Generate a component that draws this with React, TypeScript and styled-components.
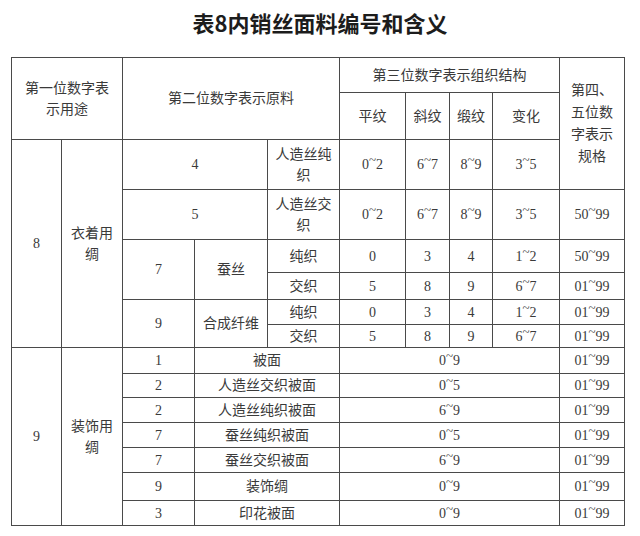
import React from 'react';
import styled, {createGlobalStyle} from 'styled-components';

const Global = createGlobalStyle`
  html, body {
    margin: 0;
    padding: 0;
    background: #ffffff;
  }
`

type Range = string

type FabricRow = {
    code: string
    name: string
    range: Range
    spec: string
}

const decoRows: FabricRow[] = [
    {code: '1', name: '被面', range: '0~9', spec: '01~99'},
    {code: '2', name: '人造丝交织被面', range: '0~5', spec: '01~99'},
    {code: '2', name: '人造丝纯织被面', range: '6~9', spec: '01~99'},
    {code: '7', name: '蚕丝纯织被面', range: '0~5', spec: '01~99'},
    {code: '7', name: '蚕丝交织被面', range: '6~9', spec: '01~99'},
    {code: '9', name: '装饰绸', range: '0~9', spec: '01~99'},
    {code: '3', name: '印花被面', range: '0~9', spec: '01~99'},
]

const decoHeights = [26, 24, 25, 25, 25, 28, 25]
const colWidths = [50, 61, 72, 73, 72, 66, 44, 43, 67, 65]

const Val = ({v}: { v: string }) => {
    const parts = v.split('~')
    if (parts.length < 2) return <>{v}</>
    return <>{parts[0]}<Tilde>~</Tilde>{parts[1]}</>
}

export default function App() {
    return (
        <Page>
            <Global/>
            <Title>表8内销丝面料编号和含义</Title>
            <Table>
                <colgroup>
                    {colWidths.map((w, i) => <col key={i} style={{width: w}}/>)}
                </colgroup>
                <tbody>
                <Row h={35}>
                    <Cell colSpan={2} rowSpan={2}>第一位数字表<br/>示用途</Cell>
                    <Cell colSpan={3} rowSpan={2}>第二位数字表示原料</Cell>
                    <Cell colSpan={4}>第三位数字表示组织结构</Cell>
                    <Cell rowSpan={3} tall>第四、<br/>五位数<br/>字表示<br/>规格</Cell>
                </Row>
                <Row h={47}>
                    <Cell>平纹</Cell>
                    <Cell>斜纹</Cell>
                    <Cell>缎纹</Cell>
                    <Cell>变化</Cell>
                </Row>
                <Row h={50}>
                    <Cell rowSpan={6}>8</Cell>
                    <Cell rowSpan={6} wrap>衣着用绸</Cell>
                    <Cell colSpan={2}>4</Cell>
                    <Cell wrap>人造丝纯织</Cell>
                    <Cell><Val v="0~2"/></Cell>
                    <Cell><Val v="6~7"/></Cell>
                    <Cell><Val v="8~9"/></Cell>
                    <Cell><Val v="3~5"/></Cell>
                </Row>
                <Row h={50}>
                    <Cell colSpan={2}>5</Cell>
                    <Cell wrap>人造丝交织</Cell>
                    <Cell><Val v="0~2"/></Cell>
                    <Cell><Val v="6~7"/></Cell>
                    <Cell><Val v="8~9"/></Cell>
                    <Cell><Val v="3~5"/></Cell>
                    <Cell><Val v="50~99"/></Cell>
                </Row>
                <Row h={33}>
                    <Cell rowSpan={2}>7</Cell>
                    <Cell rowSpan={2}>蚕丝</Cell>
                    <Cell>纯织</Cell>
                    <Cell>0</Cell>
                    <Cell>3</Cell>
                    <Cell>4</Cell>
                    <Cell><Val v="1~2"/></Cell>
                    <Cell><Val v="50~99"/></Cell>
                </Row>
                <Row h={27}>
                    <Cell>交织</Cell>
                    <Cell>5</Cell>
                    <Cell>8</Cell>
                    <Cell>9</Cell>
                    <Cell><Val v="6~7"/></Cell>
                    <Cell><Val v="01~99"/></Cell>
                </Row>
                <Row h={25}>
                    <Cell rowSpan={2}>9</Cell>
                    <Cell rowSpan={2}>合成纤维</Cell>
                    <Cell>纯织</Cell>
                    <Cell>0</Cell>
                    <Cell>3</Cell>
                    <Cell>4</Cell>
                    <Cell><Val v="1~2"/></Cell>
                    <Cell><Val v="01~99"/></Cell>
                </Row>
                <Row h={23}>
                    <Cell>交织</Cell>
                    <Cell>5</Cell>
                    <Cell>8</Cell>
                    <Cell>9</Cell>
                    <Cell><Val v="6~7"/></Cell>
                    <Cell><Val v="01~99"/></Cell>
                </Row>
                {decoRows.map((r, i) => (
                    <Row h={decoHeights[i]} key={i}>
                        {i === 0 && <>
                            <Cell rowSpan={7}>9</Cell>
                            <Cell rowSpan={7} wrap>装饰用绸</Cell>
                        </>}
                        <Cell>{r.code}</Cell>
                        <Cell colSpan={2}>{r.name}</Cell>
                        <Cell colSpan={4}><Val v={r.range}/></Cell>
                        <Cell><Val v={r.spec}/></Cell>
                    </Row>
                ))}
                </tbody>
            </Table>
        </Page>
    );
}

const Page = styled.div`
  width: 640px;
  height: 536px;
  padding: 10px 0 0 11px;
  box-sizing: border-box;
  display: flex;
  flex-direction: column;
  align-items: flex-start;
  overflow: hidden;
`

const Title = styled.h1`
  width: 618px;
  margin: 0 0 23px;
  text-align: center;
  font-family: "Noto Sans CJK SC", "Noto Sans", sans-serif;
  font-size: 22px;
  line-height: 24px;
  font-weight: 700;
  color: #1c1c1c;
`

const Table = styled.table`
  border-collapse: collapse;
  table-layout: fixed;
  width: 614px;
  font-family: "Liberation Serif", "Noto Sans CJK SC", serif;
  font-size: 14px;
  line-height: 21px;
  color: #3a3a3a;
`

const Row = styled.tr<{ h: number }>`
  height: ${props => props.h}px;
`

const Cell = styled.td<{ wrap?: boolean, tall?: boolean }>`
  border: 1px solid #4a4a4a;
  padding: 0 ${props => props.wrap ? 4 : 0}px;
  text-align: center;
  vertical-align: middle;
  line-height: ${props => props.tall ? 22 : 21}px;
  overflow: hidden;
`

const Tilde = styled.span`
  display: inline-block;
  transform: translateY(-5px);
  font-size: 13px;
`
